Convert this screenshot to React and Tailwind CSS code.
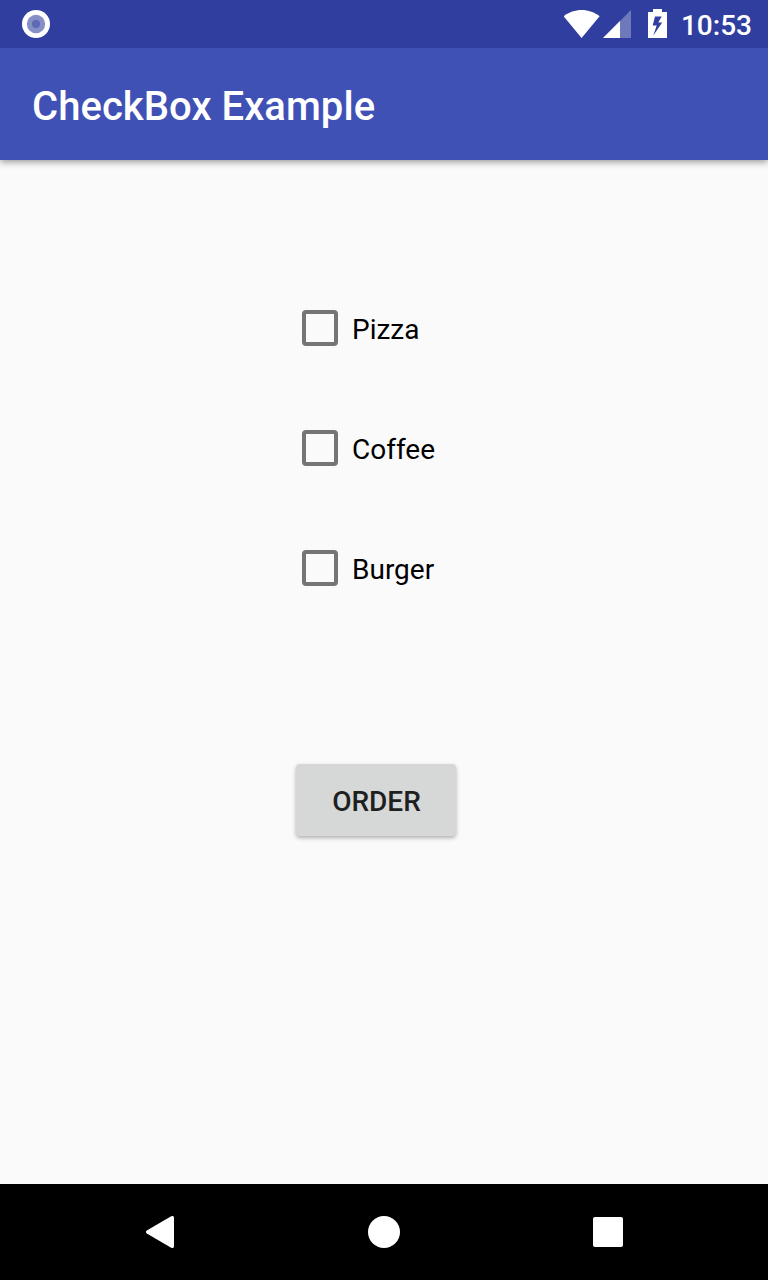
import React from "react";

const items = ["Pizza", "Coffee", "Burger"];

function StatusBar() {
  return (
    <div className="relative z-10 flex h-12 shrink-0 items-center justify-between bg-[#303f9f] pl-[22px] pr-4">
      <svg width="28" height="28" viewBox="0 0 28 28" className="block">
        <circle cx="14" cy="14" r="14" fill="#fff" />
        <circle cx="14" cy="14" r="9.2" fill="#868fc8" />
        <circle cx="14" cy="14" r="4.2" fill="#5f6ab5" />
      </svg>
      <div className="flex h-full items-center text-white">
        <svg width="36" height="28" viewBox="0 0 36 28" className="block">
          <path d="M17.600 28L-.4 6.200C4.500 2.400 11 0 17.600 0s13.300 2.400 18 6.200z" fill="#fff" />
        </svg>
        <svg width="28" height="28" viewBox="0 0 28 28" className="ml-[3px] block">
          <path d="M0 28L28 0v28z" fill="#fff" fillOpacity="0.3" />
          <path d="M0 28L17 11v17z" fill="#fff" />
        </svg>
        <svg width="19" height="29" viewBox="0 0 19 29" className="mb-px ml-[17px] block">
          <path
            fillRule="evenodd"
            d="M5 0h9v3h5v26H0V3h5zM7 7.500L4.700 16.500h4L5.300 26.500L14.200 13.500H10.200L13.700 7.500z"
            fill="#fff"
          />
        </svg>
        <span className="ml-[14px] mt-[3px] text-[28px] font-medium leading-8">10:53</span>
      </div>
    </div>
  );
}

function Option({ label }) {
  return (
    <label className="flex h-16 items-center gap-[14px]">
      <input
        type="checkbox"
        className="m-0 size-9 shrink-0 appearance-none rounded-[4px] border-4 border-[#757575]"
      />
      <span className="mt-1 text-[28px] leading-8 text-black">{label}</span>
    </label>
  );
}

function NavigationBar() {
  return (
    <nav className="flex h-24 shrink-0 items-center justify-between bg-black px-[144px]">
      <svg width="32" height="32" viewBox="0 0 32 32" className="block">
        <path
          d="M27.200 .3Q30 -.8 30 2V30Q30 32.800 27.200 31.700L2.800 17.500Q1 16 2.800 14.500z"
          fill="#fff"
        />
      </svg>
      <div className="size-8 rounded-full bg-white" />
      <div className="flex size-8 items-center justify-center">
        <div className="size-[30px] rounded-[2px] bg-white" />
      </div>
    </nav>
  );
}

export default function App() {
  return (
    <div className="flex h-[1280px] w-[768px] flex-col overflow-hidden bg-[#fafafa] font-['Roboto',sans-serif]">
      <StatusBar />
      <header className="flex h-28 shrink-0 items-center bg-[#3f51b5] pl-8 pt-1.5 shadow-[0_2px_7px_rgba(0,0,0,0.4)]">
        <h1 className="text-[40px] font-medium leading-[48px] tracking-[0.05px] text-white">CheckBox Example</h1>
      </header>
      <main className="flex flex-1 flex-col items-start pt-[136px]">
        <div className="ml-[302px] flex flex-col gap-14">
          {items.map((label) => (
            <Option key={label} label={label} />
          ))}
        </div>
        <button
          type="button"
          className="ml-[296px] mt-[164px] h-[72px] w-40 rounded-[4px] bg-[#d6d7d7] pl-px pt-1 text-[28px] font-medium leading-8 text-[#1e1f1f] shadow-[0_2px_4px_rgba(0,0,0,0.3)]"
        >
          ORDER
        </button>
      </main>
      <NavigationBar />
    </div>
  );
}
